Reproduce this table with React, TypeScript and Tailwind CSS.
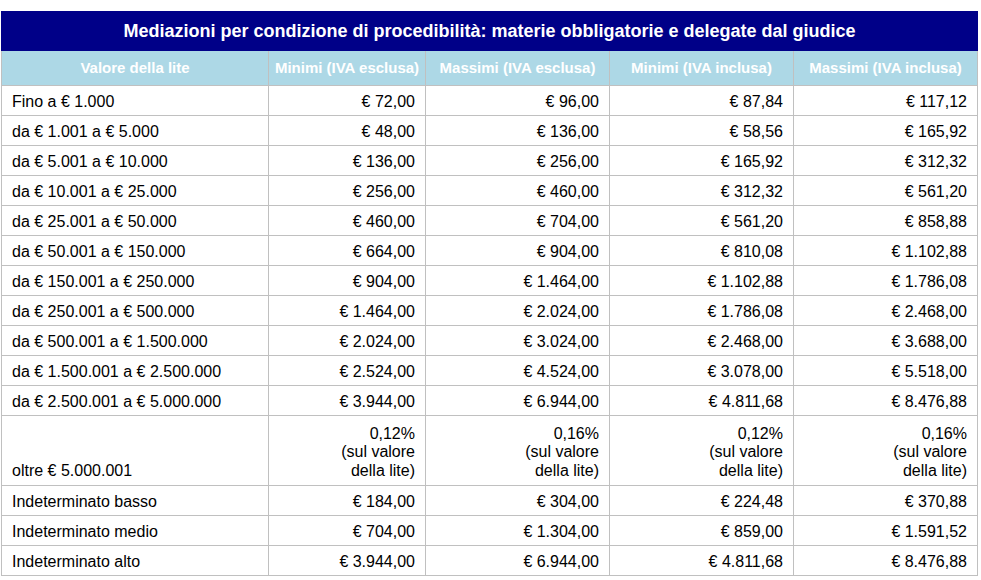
import React from "react";

type Row = { label: string; v: string[]; tall?: boolean };

const rows: Row[] = [
  { label: "Fino a € 1.000", v: ["€ 72,00", "€ 96,00", "€ 87,84", "€ 117,12"] },
  { label: "da € 1.001 a € 5.000", v: ["€ 48,00", "€ 136,00", "€ 58,56", "€ 165,92"] },
  { label: "da € 5.001 a € 10.000", v: ["€ 136,00", "€ 256,00", "€ 165,92", "€ 312,32"] },
  { label: "da € 10.001 a € 25.000", v: ["€ 256,00", "€ 460,00", "€ 312,32", "€ 561,20"] },
  { label: "da € 25.001 a € 50.000", v: ["€ 460,00", "€ 704,00", "€ 561,20", "€ 858,88"] },
  { label: "da € 50.001 a € 150.000", v: ["€ 664,00", "€ 904,00", "€ 810,08", "€ 1.102,88"] },
  { label: "da € 150.001 a € 250.000", v: ["€ 904,00", "€ 1.464,00", "€ 1.102,88", "€ 1.786,08"] },
  { label: "da € 250.001 a € 500.000", v: ["€ 1.464,00", "€ 2.024,00", "€ 1.786,08", "€ 2.468,00"] },
  { label: "da € 500.001 a € 1.500.000", v: ["€ 2.024,00", "€ 3.024,00", "€ 2.468,00", "€ 3.688,00"] },
  { label: "da € 1.500.001 a € 2.500.000", v: ["€ 2.524,00", "€ 4.524,00", "€ 3.078,00", "€ 5.518,00"] },
  { label: "da € 2.500.001 a € 5.000.000", v: ["€ 3.944,00", "€ 6.944,00", "€ 4.811,68", "€ 8.476,88"] },
  { label: "oltre € 5.000.001", v: ["0,12%|(sul valore|della lite)", "0,16%|(sul valore|della lite)", "0,12%|(sul valore|della lite)", "0,16%|(sul valore|della lite)"], tall: true },
  { label: "Indeterminato basso", v: ["€ 184,00", "€ 304,00", "€ 224,48", "€ 370,88"] },
  { label: "Indeterminato medio", v: ["€ 704,00", "€ 1.304,00", "€ 859,00", "€ 1.591,52"] },
  { label: "Indeterminato alto", v: ["€ 3.944,00", "€ 6.944,00", "€ 4.811,68", "€ 8.476,88"] },
];

const heads = ["Valore della lite", "Minimi (IVA esclusa)", "Massimi (IVA esclusa)", "Minimi (IVA inclusa)", "Massimi (IVA inclusa)"];

export default function App() {
  return (
    <div className="w-[981px] h-[580px] bg-white overflow-hidden pt-[11px] pl-[1px]" style={{ fontFamily: '"Liberation Sans", Arial, sans-serif' }}>
      <table className="border-collapse table-fixed w-[976px] text-[16px] leading-[18.4px] text-black">
        <colgroup>
          <col className="w-[267px]" />
          <col className="w-[157px]" />
          <col className="w-[184px]" />
          <col className="w-[184px]" />
          <col className="w-[184px]" />
        </colgroup>
        <thead>
          <tr className="h-[39px]">
            <th colSpan={5} className="bg-[#000088] text-white font-bold text-[18px] text-center p-0 border border-[#000088]">
              Mediazioni per condizione di procedibilità: materie obbligatorie e delegate dal giudice
            </th>
          </tr>
          <tr className="h-[35px]">
            {heads.map((h) => (
              <th key={h} className="bg-[#add8e6] text-white font-bold text-[15px] text-center p-0 border border-[#c0c0c0]">
                {h}
              </th>
            ))}
          </tr>
        </thead>
        <tbody>
          {rows.map((r) => (
            <tr key={r.label} className={r.tall ? "h-[70px]" : "h-[30px]"}>
              <td className={`border border-[#c0c0c0] px-[10px] text-left ${r.tall ? "align-bottom pt-0 pb-[5px]" : "align-middle pt-[4px] pb-0"}`}>
                {r.label}
              </td>
              {r.v.map((x, i) => (
                <td key={i} className="border border-[#c0c0c0] px-[10px] pt-[4px] pb-0 text-right align-middle">
                  {x.split("|").map((line, j) => (
                    <div key={j}>{line}</div>
                  ))}
                </td>
              ))}
            </tr>
          ))}
        </tbody>
      </table>
    </div>
  );
}
